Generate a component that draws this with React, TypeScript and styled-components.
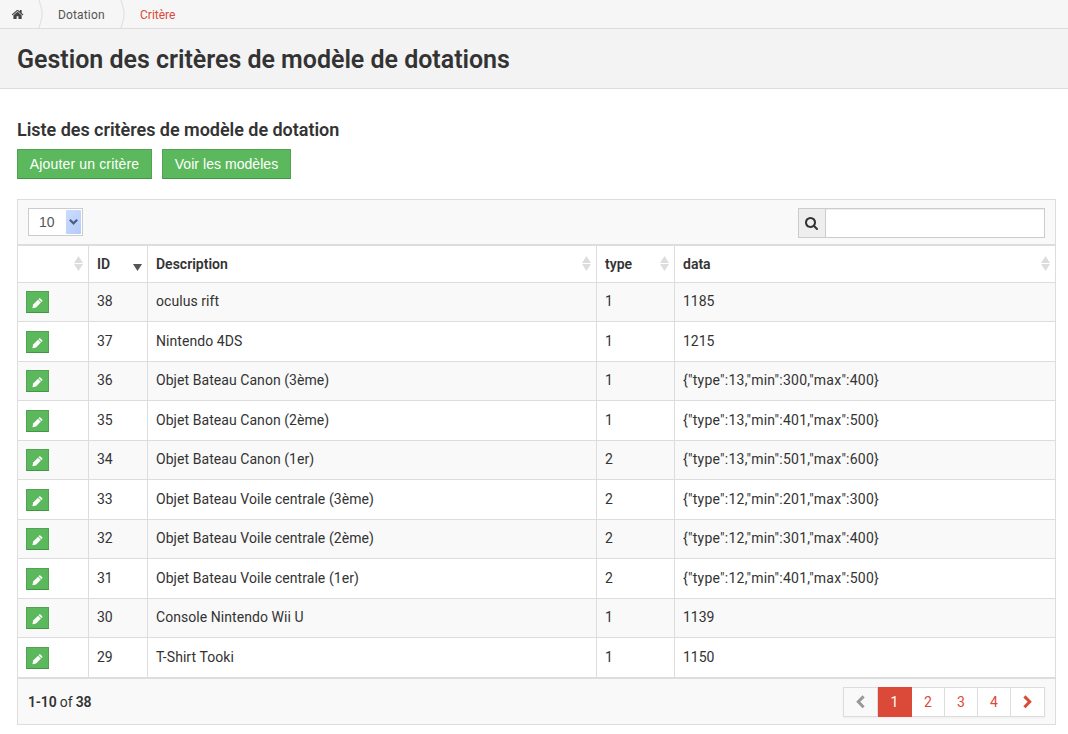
import React from 'react';
import styled, { createGlobalStyle, css } from 'styled-components';

const GlobalStyle = createGlobalStyle`
  *, *::before, *::after { box-sizing: border-box; }
  body {
    margin: 0;
    background: #fff;
    color: #333;
    font: 14px/20px Roboto, "Liberation Sans", sans-serif;
  }
`;

const Breadcrumb = styled.nav`
  display: flex;
  height: 29px;
  background: #f6f6f6;
  border-bottom: 1px solid #ddd;
  font-size: 12px;
  line-height: 30px;
  color: #555;
`;

const Crumb = styled.span<{ $width: number; $pad: number; $active?: boolean }>`
  display: block;
  width: ${p => p.$width}px;
  padding-left: ${p => p.$pad}px;
  white-space: nowrap;
  letter-spacing: ${p => (p.$active ? 0 : 0.15)}px;
  color: ${p => (p.$active ? '#db4a39' : '#555')};
`;

const HomeIcon = styled.svg`
  display: block;
  width: 12px;
  height: 11px;
  margin-top: 9px;
  fill: #444;
`;

const Divider = styled.svg`
  flex: none;
  width: 6px;
  height: 28px;
  fill: none;
  stroke: #ddd;
`;

const PageHeader = styled.header`
  height: 60px;
  padding-left: 17px;
  background: #f3f3f3;
  border-bottom: 1px solid #ddd;
`;

const Title = styled.h1`
  margin: 0;
  font-size: 25px;
  font-weight: 600;
  letter-spacing: -0.02px;
  line-height: 61px;
`;

const Content = styled.main`
  padding: 30px 12px 0 17px;
`;

const Subtitle = styled.h2`
  margin: 0;
  font-size: 18px;
  font-weight: 600;
  letter-spacing: -0.03px;
  line-height: 22px;
`;

const Actions = styled.div`
  display: flex;
  gap: 10px;
  margin: 8px 0 20px;
`;

const green = css`
  background: #5cb85c;
  border: 1px solid #51a351;
  border-bottom-color: #419641;
  color: #fff;
`;

const ActionButton = styled.button<{ $width: number; $spacing: number }>`
  ${green}
  width: ${p => p.$width}px;
  height: 30px;
  padding: 0;
  font: 14px/28px "Liberation Sans", sans-serif;
  letter-spacing: ${p => p.$spacing}px;
`;

const Grid = styled.section`
  border: 1px solid #ddd;
`;

const Toolbar = styled.div`
  display: flex;
  justify-content: space-between;
  height: 46px;
  padding: 8px 10px 0;
  background: #f9f9f9;
  border-bottom: 2px solid #ddd;
`;

const PageSize = styled.div`
  display: flex;
  justify-content: space-between;
  width: 55px;
  height: 28px;
  padding: 1px 1px 1px 10px;
  background: #fff;
  border: 1px solid #ccc;
  color: #555;
  font: 14px/25px "Liberation Sans", sans-serif;
`;

const SelectArrow = styled.span`
  display: flex;
  align-items: center;
  justify-content: center;
  width: 15px;
  height: 24px;
  border-radius: 1px;
  background: linear-gradient(135deg, #ccdcfd, #b4cbfb);
`;

const Search = styled.div`
  display: flex;
  width: 247px;
  height: 30px;
  border: 1px solid #ccc;
`;

const SearchAddon = styled.span`
  display: flex;
  align-items: center;
  width: 27px;
  padding-left: 6px;
  background: #eee;
  border-right: 1px solid #ccc;
`;

const SearchInput = styled.input`
  flex: 1;
  min-width: 0;
  border: 0;
  padding: 0 6px;
  background: #fff;
  box-shadow: inset 0 1px 1px rgba(0, 0, 0, 0.075);
  outline: none;
`;

const columns = css`
  display: grid;
  grid-template-columns: 71px 59px 449px 78px 1fr;
`;

const HeadRow = styled.div`
  ${columns}
  height: 37px;
  border-bottom: 1px solid #ddd;
  font-weight: 600;
`;

const HeadCell = styled.div`
  display: flex;
  justify-content: space-between;
  padding: 8px 5px 0 8px;
  border-right: 1px solid #ddd;
  &:last-child { border-right: 0; }
`;

const Row = styled.div`
  ${columns}
  height: 40px;
  border-bottom: 1px solid #ddd;
  &:nth-child(odd) { height: 39px; background: #f9f9f9; }
  &:last-child { height: 41px; border-bottom-width: 2px; }
`;

const Cell = styled.div<{ $spacing?: number }>`
  padding: 8px 8px 0;
  border-right: 1px solid #ddd;
  white-space: nowrap;
  letter-spacing: ${p => p.$spacing ?? 0}px;
  ${Row}:nth-child(even) & { padding-top: 9px; }
  &:last-child { border-right: 0; }
`;

const EditButton = styled.button`
  ${green}
  display: flex;
  align-items: center;
  justify-content: center;
  width: 23px;
  height: 22px;
  padding: 2px 0 0;
`;

const SortIcon = styled.svg`
  width: 9px;
  height: 15px;
  margin-top: 2px;
`;

const Footer = styled.footer`
  display: flex;
  justify-content: space-between;
  height: 45px;
  padding: 8px 10px 0;
  background: #f9f9f9;
`;

const Summary = styled.div`
  line-height: 30px;
  letter-spacing: -0.15px;
  b { font-weight: 600; }
`;

const Pager = styled.div`
  display: flex;
  height: 30px;
  box-shadow: 0 1px 2px rgba(0, 0, 0, 0.05);
`;

const PageButton = styled.span<{ $width: number; $state?: 'active' | 'disabled' }>`
  display: flex;
  align-items: center;
  justify-content: center;
  width: ${p => p.$width}px;
  border: solid #ddd;
  border-width: 1px 1px 1px 0;
  background: #fff;
  color: #db4a39;
  &:first-child { border-left-width: 1px; }
  ${p => p.$state === 'disabled' && css`background: #f9f9f9; color: #999; padding-right: 1px;`}
  ${p => p.$state === 'active' && css`background: #db4a39; color: #fff; border-color: #db4a39;`}
`;

const Sort = ({ desc }: { desc?: boolean }) => (
  <SortIcon viewBox="0 0 9 15">
    {desc ? (
      <path d="M0 8h9L4.5 15z" fill="#555" />
    ) : (
      <path d="M4.5 0L9 7H0zM0 8h9l-4.5 7z" fill="#ddd" />
    )}
  </SortIcon>
);

const Separator = () => (
  <Divider viewBox="0 0 6 28">
    <path d="M1 0L4 11v6L1 28" />
  </Divider>
);

const Chevron = ({ left }: { left?: boolean }) => (
  <svg width="9" height="14" viewBox="0 0 9 14" fill="none" stroke="currentColor" strokeWidth="3">
    <path d={left ? 'M7.6 1.4L2.3 6.8l5.3 5.4' : 'M1.4 1.4l5.3 5.4-5.3 5.4'} />
  </svg>
);

const Pencil = () => (
  <svg width="11" height="11" viewBox="0 0 11 11" fill="#fff">
    <path d="M.4 10.2l.8-3.7L6 1.7l2.9 2.9-4.8 4.8z" />
    <path d="M6.5 1.2l.7-.7q.6-.5 1.2 0l1.8 1.8q.5.6 0 1.1l-.8.7z" />
  </svg>
);

const rows: [number, string, number, string][] = [
  [38, 'oculus rift', 1, '1185'],
  [37, 'Nintendo 4DS', 1, '1215'],
  [36, 'Objet Bateau Canon (3ème)', 1, '{"type":13,"min":300,"max":400}'],
  [35, 'Objet Bateau Canon (2ème)', 1, '{"type":13,"min":401,"max":500}'],
  [34, 'Objet Bateau Canon (1er)', 2, '{"type":13,"min":501,"max":600}'],
  [33, 'Objet Bateau Voile centrale (3ème)', 2, '{"type":12,"min":201,"max":300}'],
  [32, 'Objet Bateau Voile centrale (2ème)', 2, '{"type":12,"min":301,"max":400}'],
  [31, 'Objet Bateau Voile centrale (1er)', 2, '{"type":12,"min":401,"max":500}'],
  [30, 'Console Nintendo Wii U', 1, '1139'],
  [29, 'T-Shirt Tooki', 1, '1150'],
];

export default function App() {
  return (
    <>
      <GlobalStyle />
      <Breadcrumb>
        <Crumb $width={38} $pad={12}>
          <HomeIcon viewBox="64 128 1664 1536">
            <path d="M1408 992v480q0 26-19 45t-45 19h-384v-384h-256v384h-384q-26 0-45-19t-19-45v-480q0-1 .5-3t.5-3l575-474 575 474q1 2 1 6zm223-69l-62 74q-8 9-21 11h-3q-13 0-21-7l-692-577-692 577q-12 8-24 7-13-2-21-11l-62-74q-8-10-7-23.5t11-21.5l719-599q32-26 76-26t76 26l244 204v-195q0-14 9-23t23-9h192q14 0 23 9t9 23v408l219 182q10 8 11 21.5t-7 23.5z" />
          </HomeIcon>
        </Crumb>
        <Separator />
        <Crumb $width={76} $pad={14}>Dotation</Crumb>
        <Separator />
        <Crumb $width={80} $pad={14} $active>Critère</Crumb>
      </Breadcrumb>
      <PageHeader>
        <Title>Gestion des critères de modèle de dotations</Title>
      </PageHeader>
      <Content>
        <Subtitle>Liste des critères de modèle de dotation</Subtitle>
        <Actions>
          <ActionButton $width={135} $spacing={0.15}>Ajouter un critère</ActionButton>
          <ActionButton $width={129} $spacing={0.05}>Voir les modèles</ActionButton>
        </Actions>
        <Grid>
          <Toolbar>
            <PageSize>
              10
              <SelectArrow>
                <svg width="9" height="6" viewBox="0 0 9 6" fill="none" stroke="#4d6185" strokeWidth="2.2">
                  <path d="M.8.8l3.7 3.6L8.2.8" />
                </svg>
              </SelectArrow>
            </PageSize>
            <Search>
              <SearchAddon>
                <svg width="13" height="13" viewBox="64 128 1664 1664" fill="#333">
                  <path d="M1216 832q0-185-131.5-316.5t-316.5-131.5-316.5 131.5-131.5 316.5 131.5 316.5 316.5 131.5 316.5-131.5 131.5-316.5zm512 832q0 52-38 90t-90 38q-54 0-90-38l-343-342q-179 124-399 124-143 0-273.5-55.5t-225-150-150-225-55.5-273.5 55.5-273.5 150-225 225-150 273.5-55.5 273.5 55.5 225 150 150 225 55.5 273.5q0 220-124 399l343 343q37 37 37 90z" />
                </svg>
              </SearchAddon>
              <SearchInput />
            </Search>
          </Toolbar>
          <HeadRow>
            <HeadCell><span /><Sort /></HeadCell>
            <HeadCell>ID<Sort desc /></HeadCell>
            <HeadCell>Description<Sort /></HeadCell>
            <HeadCell>type<Sort /></HeadCell>
            <HeadCell>data<Sort /></HeadCell>
          </HeadRow>
          <div>
            {rows.map(([id, description, type, data]) => (
              <Row key={id}>
                <Cell><EditButton><Pencil /></EditButton></Cell>
                <Cell>{id}</Cell>
                <Cell $spacing={0.06}>{description}</Cell>
                <Cell>{type}</Cell>
                <Cell $spacing={data.startsWith('{') ? 0.25 : 0}>{data}</Cell>
              </Row>
            ))}
          </div>
          <Footer>
            <Summary><b>1-10</b> of <b>38</b></Summary>
            <Pager>
              <PageButton $width={35} $state="disabled"><Chevron left /></PageButton>
              <PageButton $width={34} $state="active">1</PageButton>
              <PageButton $width={33}>2</PageButton>
              <PageButton $width={33}>3</PageButton>
              <PageButton $width={33}>4</PageButton>
              <PageButton $width={34}><Chevron /></PageButton>
            </Pager>
          </Footer>
        </Grid>
      </Content>
    </>
  );
}
